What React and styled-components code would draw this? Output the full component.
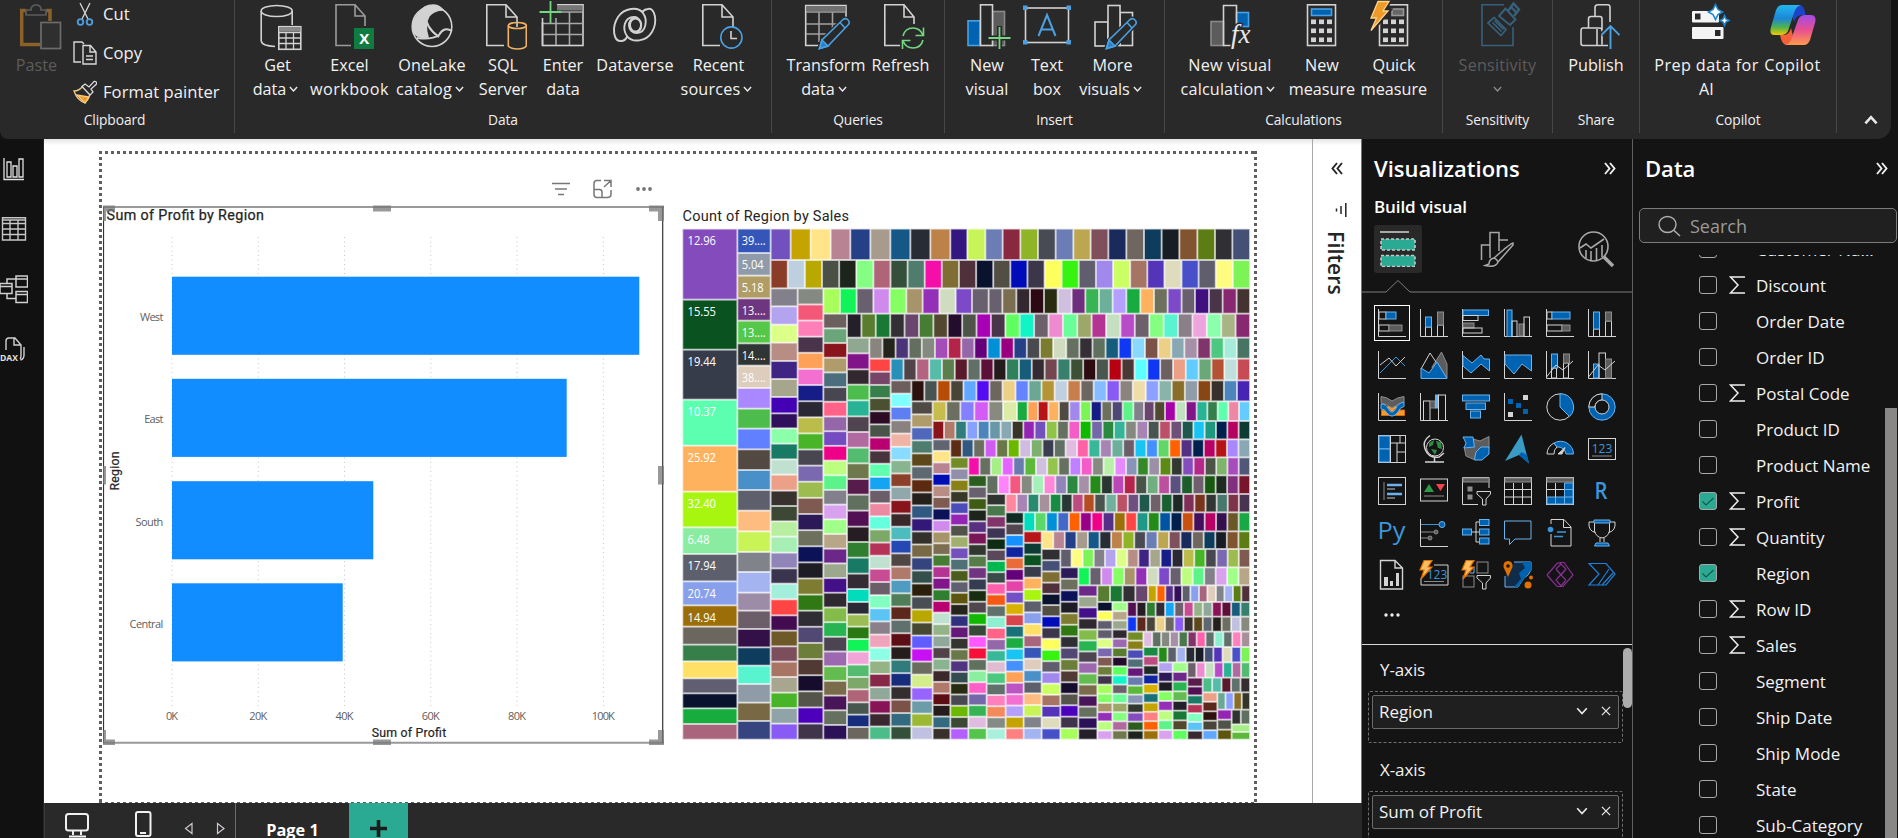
import React from 'react';
import styled, { createGlobalStyle, css } from 'styled-components';

const UI = `'Open Sans', 'Noto Sans', sans-serif`;
const DIN = `Roboto, 'Open Sans', sans-serif`;

const Global = createGlobalStyle`
  * { box-sizing: border-box; }
  body { margin: 0; background: #141414; overflow: hidden; font-family: ${UI}; color: #f2f2f2; }
  svg { display: block; }
`;

const App_ = styled.div`
  width: 1898px; height: 838px; overflow: hidden; display: flex; flex-direction: column; background: #141414;
`;

/* ---------- ribbon ---------- */
const Ribbon = styled.header`
  display: flex; flex: none; width: 1891px; height: 139px; background: #292929;
  border-radius: 0 0 14px 8px;
`;
const Group = styled.section`
  display: flex; flex-direction: column; flex: none; width: ${p => p.$w}px; height: 133px;
  border-right: 1px solid #474747; padding-left: ${p => p.$pad || 0}px;
`;
const Tools = styled.div`display: flex; height: 107px; flex: none;`;
const GroupName = styled.div`
  margin-left: -${p => p.$pad || 0}px; text-align: center; font-size: 13.8px; line-height: 25px; letter-spacing: -0.1px; color: #f0f0f0;
`;
const ToolBox = styled.div`
  width: ${p => p.$w}px; flex: none; display: flex; flex-direction: column; align-items: center;
  font-size: 16.2px; line-height: 24px; white-space: nowrap; letter-spacing: ${p => p.$ls || 0}px;
  color: ${p => (p.$dim ? '#5c5c5c' : '#f2f2f2')};
`;
const ToolLine = styled.div`
  display: flex; align-items: center; gap: 3px; height: 24px; padding-right: ${p => (p.$arrow ? 4 : 0)}px;
  letter-spacing: ${p => p.$ls || 0}px;
`;
const ClipList = styled.div`display: flex; flex-direction: column; margin-top: -6px;`;
const ClipRow = styled.div`
  display: flex; flex: none; align-items: center; gap: 6px; height: 39px; font-size: 16.600px; letter-spacing: 0.05px; white-space: nowrap;
`;
const Collapse = styled.div`flex: 1; display: flex; align-items: flex-end; justify-content: center; padding: 0 0 14px 14px;`;

const Chevron = ({ s = 9, up, c = '#e8e8e8', w = 1.6 }) => (
  <svg width={s} height={s * 0.7} viewBox="0 0 10 7" fill="none" stroke={c} strokeWidth={w}>
    <path d={up ? 'M1 6L5 1.5L9 6' : 'M1 1L5 5.5L9 1'} />
  </svg>
);

const Tool = ({ w, lines, icon, arrow, dim, ls = [] }) => (
  <ToolBox $w={w} $dim={dim}>
    <svg width="48" height="53" viewBox="-24 0 48 53" fill="none" stroke="#d2d2d2" strokeWidth="1.6">{icon}</svg>
    {lines.map((l, i) => (
      <ToolLine key={i} $ls={ls[i]} $arrow={arrow && !dim && i === lines.length - 1}>
        {l}
        {arrow && i === lines.length - 1 && <Chevron c={dim ? '#8a8a8a' : '#e8e8e8'} />}
      </ToolLine>
    ))}
  </ToolBox>
);

const Doc = () => <path d="M14 27V17L3 4.8H-16.2V45.5H1M3 4.8V17H14" />;
const Pencil = () => (
  <g>
    <path d="M-7 49L-4 40L17 19.500Q20 17.500 22 20Q24.500 22.500 22 25L2 46Z" fill="#292929" stroke="#292929" strokeWidth="4" />
    <path d="M-6.500 48.500L-4 40L17 19.500Q20 17.500 22 20Q24.500 22.500 22 25L2 46ZM14 22.500L19 28" stroke="#4aa0e0" fill="#292929" />
    <path d="M-6.500 48.500L-4 40L2 46Z" fill="#2a7fc8" stroke="#4aa0e0" />
  </g>
);
const Keys = () => [24 - 4.5, 28.5, 37.5].map(y => [-11, -3, 5].map(x => (
  <rect key={x + '-' + y} x={x} y={y} width="5" height="4.600" fill="#d2d2d2" stroke="none" />
)));
const Plus = ({ x, y }) => <path d={`M${x - 11} ${y}H${x + 11}M${x} ${y - 11}V${y + 11}`} stroke="#74d680" strokeWidth="1.8" />;

const icons = {
  getData: (<>
    <ellipse cx="-1.300" cy="11" rx="15.500" ry="5.500" />
    <path d="M-16.800 11V41Q-16 46 -3 46.500M14.200 11V25" />
    <rect x="0.800" y="26.700" width="22" height="22.600" fill="#292929" />
    <rect x="1.500" y="27" width="21" height="4.500" fill="#8a8a8a" stroke="none" />
    <path d="M1 32.500H22.500M1 38H22.500M1 43.500H22.500M8 32V49M15.500 32V49" strokeWidth="1.300" />
  </>),
  excel: (<>
    <path d="M15 26V16L5 4.800H-14V45.500H1M5 4.800V16H15" stroke="#9c9c9c" />
    <rect x="4" y="28" width="20.500" height="21" fill="#107c41" stroke="none" />
    <text x="14.200" y="44" textAnchor="middle" fontSize="15" fontWeight="700" fill="#fff" stroke="none">X</text>
  </>),
  oneLake: (<>
    <ellipse cx="0" cy="26.500" rx="19.800" ry="20" />
    <path d="M-13 13Q-8 5 1 5Q7 5 11 10Q2 10 -3 16Q-8 24 -4 37Q-12 39 -17 34Q-23 25 -13 13Z" fill="#d2d2d2" />
    <path d="M-6 15Q-7 27 7 37M-15 38Q0 40 7 35Q12 26 20 31" strokeWidth="2" />
  </>),
  sql: (<>
    <Doc />
    <g stroke="#f2b264"><ellipse cx="14.300" cy="25.500" rx="9" ry="3" /><path d="M5.300 25.500V46Q8 49 14.300 49Q21 49 23.300 46V25.500" /></g>
  </>),
  enter: (<>
    <rect x="-20.500" y="4.800" width="40.500" height="40.700" />
    <rect x="-8" y="5.500" width="27.500" height="5" fill="#777" stroke="none" />
    <path d="M-20 12H20M-20 23.500H20M-20 34.500H20M-7 12V45M6.500 12V45" stroke="#a8a8a8" />
    <path d="M-24 3H-6V18H-24Z" fill="#292929" stroke="none" />
    <path d="M-20.500 22V45.500" />
    <Plus x={-12.5} y={12} />
  </>),
  dataverse: (<g strokeWidth="1.900">
    <path d="M-14 41C-21 42 -24 28 -17 17C-11 8 3 6 8 13C13 20 11 33 2 33C-8 33 -9 19 1 17" />
    <path d="M13 9C20 7 23 22 17 32C11 42 -3 43 -8 36C-13 29 -11 17 -1 17C7 17 9 30 2 32M13 9C10 9 8 11 7 12M-14 41C-11 41 -9 39 -8 37" />
    <ellipse cx="0.500" cy="25" rx="5.500" ry="6.500" />
  </g>),
  recent: (<><Doc /><circle cx="12.400" cy="37.500" r="10.600" fill="#292929" stroke="#4aa0e0" /><path d="M12 31V38.500H18" /></>),
  transform: (<>
    <path d="M20 22V5.500H-20.300V45.500H-6" />
    <rect x="-19.500" y="6" width="39" height="5" fill="#707070" stroke="none" />
    <path d="M-20 12H20M-20 24H12M-20 34H0M-7 12V42M6.500 12V30" stroke="#a0a0a0" />
    <Pencil />
  </>),
  refresh: (<>
    <path d="M13 24V17L3 4.800H-16.200V45.500H-1M3 4.800V17H13" />
    <g stroke="#74d680"><path d="M2 36Q4 28 12 28Q19 28 22 35M22.500 27.500V35.500H14.500M22 40Q20 48 12 48Q5 48 2 41M1.500 49V40.500H9.500" /></g>
  </>),
  newVisual: (<>
    <rect x="-19" y="20.800" width="12" height="24.700" fill="#0063b1" stroke="#4aa0e0" />
    <rect x="5.500" y="11.500" width="12" height="34" fill="#5c5c5c" stroke="#8a8a8a" />
    <rect x="-6.500" y="4.800" width="12" height="40.700" fill="#292929" />
    <path d="M0.500 38H24M12.500 26V49" stroke="#292929" strokeWidth="5" />
    <Plus x={12.5} y={38} />
  </>),
  textBox: (<>
    <rect x="-21.500" y="8" width="43" height="34.500" />
    {[[-24, 5.5], [19.5, 5.5], [-24, 40], [19.5, 40]].map(([x, y]) => <rect key={x + ',' + y} x={x} y={y} width="4.500" height="4.500" fill="#4aa0e0" stroke="none" />)}
    <path d="M-8.500 36L0 15L8.500 36M-5.500 29.500H5.500" stroke="#4aa0e0" strokeWidth="2" />
  </>),
  more: (<>
    <rect x="-18" y="22" width="13" height="24" /><rect x="7" y="12.500" width="12.500" height="33" />
    <rect x="-5" y="5.500" width="12" height="40" fill="#292929" /><Pencil />
  </>),
  calc: (<>
    <rect x="-19" y="21.500" width="12.500" height="24" fill="#5c5c5c" stroke="#8a8a8a" />
    <rect x="6.500" y="12.500" width="12" height="14" fill="#0063b1" stroke="#4aa0e0" />
    <path d="M3 45.500H-6.500V5.500H6.500V30" />
    <text x="1" y="43" fontFamily="'Liberation Serif', serif" fontStyle="italic" fontSize="27" fill="#e8e8e8" stroke="#292929" strokeWidth="3" paintOrder="stroke">fx</text>
  </>),
  measure: (<>
    <rect x="-14.500" y="4.800" width="28" height="40.700" />
    <rect x="-10.500" y="9" width="20" height="6.500" fill="#0063b1" stroke="#4aa0e0" /><Keys />
  </>),
  quick: (<>
    <rect x="-14.500" y="4.800" width="28" height="40.700" />
    <rect x="-2" y="9" width="11.500" height="6.500" fill="#666" stroke="#999" /><Keys />
    <path d="M-16 1.500H-5L-11 11H-6L-23 30.500L-17.500 18H-23Z" fill="#ee9a28" stroke="#292929" strokeWidth="5" />
    <path d="M-16 1.500H-5L-11 11H-6L-23 30.500L-17.500 18H-23Z" fill="#ee9a28" stroke="#ffd48a" strokeWidth="1.300" />
  </>),
  sensitivity: (<g stroke="#36607c">
    <path d="M6 4.800H-16V45.500H15V27" />
    <path d="M-10 23L-4 17.500L8 29.500L3 35.500ZM-5.500 22.500L3.500 31.500M-3.500 20.500L5.500 29.500" strokeWidth="1.700" />
    <path d="M1 16L7.500 8.500L17.500 19.500L12 25Z" strokeWidth="2" />
    <path d="M10 11L15.500 3.500L21 9.500L16 16M13 7L18.500 12.500" strokeWidth="2.400" />
  </g>),
  publish: (<>
    <path d="M6 44.500V30Q6 28 3 28H-13Q-15 28 -15 31V43Q-15 45.500 -13 45.500H14M-7.500 28V19Q-7.500 16.500 -5 16.500H4Q6 16.500 6 19V33M-1 16V7.500Q-1 4.800 2 4.800H12Q14 4.800 14 7.500V22M1 29V45" />
    <path d="M14.500 49V26M5.500 35L14.500 26L23.500 35" stroke="#292929" strokeWidth="5" />
    <path d="M14.500 49V26M5.500 35L14.500 26L23.500 35" stroke="#4aa0e0" strokeWidth="1.900" />
  </>),
  prep: (<>
    <rect x="-15" y="11" width="27" height="11.500" rx="1" fill="#f4f4f4" stroke="none" /><rect x="-12" y="13.500" width="5.500" height="6" fill="#292929" stroke="none" />
    <rect x="-15" y="27" width="31.500" height="12" rx="1" fill="#f4f4f4" stroke="none" /><rect x="8" y="30" width="5.500" height="6" fill="#292929" stroke="none" />
    <g fill="#fff" stroke="#1b86d4"><path d="M8.500 4.500L11 9.500L15.500 12L11 14.500L8.500 19.500L6 14.500L1.500 12L6 9.500Z" /><path d="M17.500 15.500L19 19L22 20.500L19 22L17.500 25.500L16 22L13 20.500L16 19Z" /></g>
  </>),
  copilot: (<>
    <defs>
      <linearGradient id="cpA" x1="0" y1="0" x2="0" y2="1"><stop offset="0" stopColor="#22b8ee" /><stop offset="0.450" stopColor="#1c86d8" /><stop offset="0.750" stopColor="#52b44a" /><stop offset="1" stopColor="#f2c800" /></linearGradient>
      <linearGradient id="cpB" x1="0" y1="0" x2="0" y2="1"><stop offset="0" stopColor="#a24be8" /><stop offset="0.500" stopColor="#e85090" /><stop offset="1" stopColor="#ff9a4a" /></linearGradient>
    </defs>
    <g stroke="none">
      <path d="M2 5H6Q10 5 11.500 10L12.500 15H9Q3 15 1 22L-1 15Z" fill="#1c44c8" />
      <path d="M-4 45H-6Q-10 45 -12 39L-13 35H-9Q-4 35 -2 28L0 36Z" fill="#f4603a" />
      <path d="M-11 5H8Q3 6 1 13L-5 31Q-7 35 -12 35H-19Q-24 35 -22 27L-17 10Q-15 5 -11 5Z" fill="url(#cpA)" />
      <path d="M11 45H-8Q-3 44 -1 37L5 20Q7 15 12 15H18Q24 15 22 23L17 40Q15 45 11 45Z" fill="url(#cpB)" />
    </g>
  </>),
};

const PasteIcon = () => (
  <svg width="74" height="53" viewBox="0 0 74 53" fill="none" strokeWidth="1.700">
    <path d="M26 10.500H21.700V44.500H40M46 10.500H50V21" stroke="#8a6228" strokeWidth="3.500" />
    <path d="M26 15V10H31Q31 5 36.500 5Q41 5 41 10H46V15Z" stroke="#5c5c5c" />
    <rect x="41" y="22.500" width="19.500" height="26" fill="#2f2f2f" stroke="#6c6c6c" />
  </svg>
);
const CutIcon = () => (
  <svg width="24" height="24" viewBox="0 0 24 24" fill="none" stroke="#d8d8d8" strokeWidth="1.300">
    <path d="M7 1L15 17M17 1L9 17" /><circle cx="7.500" cy="20" r="2.800" stroke="#4aa0e0" strokeWidth="1.800" /><circle cx="16.500" cy="20" r="2.800" stroke="#4aa0e0" strokeWidth="1.800" />
  </svg>
);
const CopyIcon = () => (
  <svg width="24" height="24" viewBox="0 0 24 24" fill="none" stroke="#d8d8d8" strokeWidth="1.400">
    <path d="M8 21H1V1H9L11 3M10 4.500H17.500L23 11V23H10ZM17 5V11H23M13 15H20M13 18.500H20" />
  </svg>
);
const PainterIcon = () => (
  <svg width="24" height="24" viewBox="0 0 24 24" fill="none" strokeWidth="1.300">
    <path d="M1 11Q6 11 10 6L17 14Q16 19 12 23Q4 20 1 11Z" fill="#292929" stroke="#f0c888" /><path d="M4 15L12 23L16 17Z" fill="#ee9a28" stroke="#f4ca80" />
    <path d="M9 6.500L12 4L16 7L21 1.500Q24 1 23.500 4L18 9L20 12L17 15Z" stroke="#d8d8d8" fill="#292929" />
  </svg>
);

/* ---------- body ---------- */
const Body = styled.div`display: flex; flex: 1; min-height: 0;`;
const Rail = styled.nav`width: 44px; flex: none; background: #111; border-right: 1px solid #242424;`;
const RailItem = styled.div`height: 60px; display: flex; align-items: center; padding-bottom: 1px; svg { flex: none; }`;
const Center = styled.div`width: 1318px; flex: none; display: flex; flex-direction: column;`;
const Stage = styled.div`height: 664px; flex: none; display: flex; background: linear-gradient(#e4e4e4, #fff 6px);`;
const CanvasArea = styled.main`width: 1268px; padding: 12px 0 0 55px;`;
const dots = dir => `repeating-linear-gradient(${dir}, #5f5f5f 0 3px, transparent 3px 6px)`;
const ReportPage = styled.div`
  width: 1158px; height: 652px; display: flex; padding-left: 4px;
  background:
    ${dots('to right')} top / 100% 3px no-repeat,
    ${dots('to right')} bottom / 100% 1px no-repeat,
    ${dots('to bottom')} left / 3px 100% no-repeat,
    ${dots('to bottom')} right / 3px 100% no-repeat;
`;
const Visual = styled.div`display: flex; flex-direction: column; width: ${p => p.$w}px; margin-right: 17px;`;
const VisualHeader = styled.div`
  height: 53px; display: flex; justify-content: flex-end; align-items: center; gap: 23px; padding: 23px 12px 0 0;
`;
const FiltersPane = styled.aside`
  width: 50px; border-left: 1px solid #a8a8a8; border-right: 1px solid #777; background: linear-gradient(#e4e4e4, #fff 6px);
  display: flex; flex-direction: column; align-items: center; padding-top: 23px; color: #252423;
`;
const FilterGlyph = styled.svg`margin: 28px 0 0 8px;`;
const FiltersLabel = styled.div`
  writing-mode: vertical-rl; font-size: 21px; font-weight: 600; line-height: 24px; letter-spacing: 0.200px; margin: 14px 0 0 -3px;
`;
const Footer = styled.footer`flex: 1; background: #292929; display: flex; border-left: 1px solid #3a3a3a;`;
const FootIcons = styled.div`width: 191px; border-right: 1px solid #6a6a6a;`;
const PageTab = styled.div`width: 113px; text-align: center; font-weight: 700; font-size: 16.300px; line-height: 55px; height: 35px; overflow: hidden; color: #fff;`;
const AddTab = styled.div`width: 59px; background: #2aaa92; display: flex; justify-content: center; padding-top: 17px;`;

/* ---------- bar chart ---------- */
const bars = [
  { name: 'West', y: 276.7, w: 467.3, ty: 317, tw: 23.3 },
  { name: 'East', y: 378.8, w: 394.7, ty: 419, tw: 19 },
  { name: 'South', y: 481.2, w: 201.3, ty: 522, tw: 27.7 },
  { name: 'Central', y: 583.3, w: 170.7, ty: 624, tw: 33.7 },
];
const BarChart = () => (
  <svg width="562" height="544" viewBox="103 204 562 544" fontFamily={UI}>
    <text x="106.500" y="220.300" fontFamily={DIN} fontSize="14.300" fill="#252423" stroke="#252423" strokeWidth="0.250" textLength="157.500">Sum of Profit by Region</text>
    {[0, 1, 2, 3, 4, 5].map(i => {
      const x = 172 + i * 86.27;
      return (
        <g key={i}>
          <line x1={x} x2={x} y1="237" y2="707" stroke="#c8c6c4" strokeDasharray="1 3.500" />
          <text x={x} y="720" fontSize="11" fill="#605e5c" textAnchor="middle" textLength={[12, 18, 18, 18, 18, 23][i]}>{i * 20}K</text>
        </g>
      );
    })}
    {bars.map(b => (
      <g key={b.name}>
        <rect x="172" y={b.y} width={b.w} height="78.100" fill="#118dff" />
        <text x={163.3 - b.tw} y={b.ty + 4} fontSize="11" fill="#605e5c" textLength={b.tw}>{b.name}</text>
      </g>
    ))}
    <text x="371.700" y="736.500" fontFamily={DIN} fontSize="12.300" fill="#252423" stroke="#252423" strokeWidth="0.200" textLength="74.500">Sum of Profit</text>
    <text transform="translate(119.300 490.500) rotate(-90)" fontFamily={DIN} fontSize="12.300" fill="#252423" stroke="#252423" strokeWidth="0.200" textLength="39">Region</text>
    <path d="M103 207H664M103 742.700H664" stroke="#999" strokeWidth="2" />
    <path d="M103.500 207V743M662.700 207V743" stroke="#333" strokeWidth="1.200" />
    <g fill="#777" fillOpacity="0.750">
      <path d="M103 205.500H115V211.500H106V221H103ZM664 205.500H649V211.500H658V221H664ZM103 745H115V739.500H106V730H103ZM664 745H649V739.500H658V730H664Z" />
      <path d="M373 205.500H391V211.500H373ZM373 739.500H391V745H373ZM103 466H106V484.500H103ZM658 466H664V484.500H658Z" />
    </g>
  </svg>
);

/* ---------- treemap: strips peeled off the remaining area, 'v' = column, 'h' = row ---------- */
const strips = [
  ['v', 187, '844BBD 0A5220 373C4A 5CFFB0 FFB25E A8F60F 8AECA0 5D606C 88A0EC 9B6E0A 6C675E 367F4B FFE066 605E70 0A132D 18AC3F A8657B',
    [86, 299, 449, 599, 737, 875, 982, 1062, 1144, 1216, 1280, 1334, 1384, 1435, 1480, 1525, 1572, 1619]],
  ['v', 287, '3556B8 8F9BA8 B09C64 6F3680 55C84A 303434 DECCBC AA88FF 4CBC4C 6080FF 524A42 4A90C8 5D606C FFBC80 C8F458 80838A A4B4F0 9C8CA8 6C5E68 341048 0E3C5C 58F4D0 8F9CA8 786844 364480',
    [86, 159, 227, 295, 362, 430, 497, 564, 626, 686, 748, 810, 870, 932, 994, 1056, 1116, 1178, 1232, 1287, 1342, 1397, 1452, 1508, 1563, 1619]],
  ['h', 180, '7250BE C6A400 FFE488 B88494 264088 A89A8C 155888 282C34 BC824A 341680 C8F458 6C7CB4 8A2840 90B428 484A54 6C7CB4 BCA650 7E505C 1A2A5C 706660 0E3C5C 181C24 80542E 5C7C14 303034 445074',
    [287, 347, 407, 467, 526, 586, 646, 706, 766, 826, 877, 931, 983, 1036, 1089, 1142, 1195, 1247, 1300, 1354, 1407, 1460, 1513, 1567, 1620, 1672, 1725]],
  ['h', 265, '8A3C28 BED0E0 B8A800 4A5044 1C241C 84FF84 B06478 34503A 507C6E F410A8 7E6E34 50303A 0A132D 524E44 000CB8 3C364A FCFF5C 36F40F 605E6C A088EC CCFF64 A67464 5434B8 DEDCBC 4850C8 605E6C FFFC80 7CF458'],
  ['v', 368, '82808A B4A4F0 DCFF88 B88E84 402484 A6A68C 4400B4 30105C 8CFFAA 187A64 C0E0D0 ECA088 38322E 3C4834 B8EEA0 A6EEB4 9084B8 3A344E A4EEDC FF4444 440C50 6E5A28 7C4E5C A87464 A8A68E 48B428 90A4A8 885CF4',
    [265, 319, 374, 428, 483, 537, 591, 640, 685, 731, 778, 824, 872, 918, 964, 1010, 1058, 1105, 1151, 1198, 1246, 1292, 1339, 1385, 1431, 1478, 1524, 1571, 1619]],
  ['v', 445, '848A80 F45878 FF80B8 4A344C FFA258 F470D0 161C88 2A2834 BCBC4A 48B428 484650 7A68B0 9CBC50 7E5A50 2C1A58 6E705E 0C1258 1E1C24 7E7C30 307814 2E2E34 524874 6C7E3A 523A34 160C2C 54544A 4C00BC 40344A'],
  ['h', 341, 'A8FF5C 10F458 68606E D08AEE 84FF64 A8946A 9430B8 D0DCC0 7C4AC8 68606E 68606E 7A6E50 342830 2C0A14 282C10 D0C0E0 6E307E 38B454 6CB09C B4A0FF 18AC40 FFB25E 6E705E 7C4AC8 68606E 401080 4A3448 882870 443430',
    [445, 495, 545, 595, 644, 694, 743, 793, 842, 891, 941, 982, 1024, 1065, 1107, 1148, 1190, 1231, 1272, 1313, 1354, 1396, 1437, 1478, 1520, 1560, 1602, 1643, 1685, 1725]],
  ['v', 516, '6C605E 6AA67A 88141C B09C6A 4C6E7C 484650 FF6488 9468A8 744CC0 EE0088 BCFF80 5CF488 82808A D8A2EE A0FF88 B8A688 6C2888 9CA88E 441088 302830 84BC4C 28B450 4C4450 9C68B0 64BC50 7A6C4A 481658 667060 2C1058'],
  ['h', 413, '24202A 587C30 187834 323034 68466E 467C34 524830 240C2C 4E5448 A800B4 4A3448 60FF60 10F4C8 6C606A EE8AD0 68FF98 9CA868 B43494 C4E0C0 B84CC8 6C606A 84FF80 58F4D0 8A808A EEA4DC 8CFFAC A8B484 882870'],
  ['v', 583, '90A892 801488 342830 4CBC4C 28B494 504450 B06AA0 54BC70 6E784C 581C4C 60705E 520F54 261C24 307E30 187A64 342C34 00DCBC 2A2A36 9CBC54 2A7810 10F458 F0A4D8 54BC70 7CA86A B06478 485650 162C7C 6C675E',
    [413, 460, 508, 554, 601, 649, 696, 743, 790, 837, 884, 932, 980, 1026, 1073, 1121, 1167, 1206, 1243, 1280, 1317, 1355, 1394, 1431, 1468, 1507, 1544, 1581, 1619]],
  ['h', 476, '8A847E 24241C 4C3478 646E60 848A80 A44CB8 B4244A 9468A8 640078 0090D8 980080 264088 484A50 7C7C30 D0DCC0 667060 342F34 60705E 165C7C 1038F4 88D8FF 7A5248 ECD088 88A8B4 A690A8 80346A 4CC880 A6ECD8 487464'],
  ['v', 647, 'FF4444 784468 367F4B 4A5030 2C0C24 485448 B80070 48343C 60FFB0 14A4F4 6C5E68 EC8AA4 64FFDC 7CA86A B43458 C0E0D0 C84C94 6C5E68 80FFC0 5CC4F4 8A808A F0A4BC 8CFFE4 94B488 882848 90A89A 881458 3A2830 4CBC88'],
  ['h', 541, '2890B8 504448 B46480 54BCA8 5C7E4C 5A1A2C 607068 5C1038 241C1C 30805C 185C7C 342C30 744650 38806E 3C5034 2C0C10 4A564E B80010 4A3834 5CFFFF 1038F4 6C6060 ECA088 60CCFF 6AA878 B45234 C0DEDC C84A54'],
  ['v', 709, '6C5E5C 80FFFF 5C80F4 8A8280 F0B4A4 88DCFF 88B490 8A402A 90A8AC 88141C 3A282A 4CBCBC 2448B4 504644 B07A6A 509CC0 507E58 5C281C 60706C 5C0E14 261C1C 307C7C 162C7C 342E2E 7A5248 346A80 34503A'],
  ['h', 604, '2C120E 485450 B84C04 484438 60A8FF 540CF4 6C665E ECD088 6484FF 6AA894 B49434 C0D0E0 C87E4C 6C6660 84BCFF 885CF4 8A8480 F0DCA8 8CA0FF 8AB4A8 886E28 909CA8 884614 38302A 4C84BC 4824B4'],
  ['v', 773, '504A44 B09C6A 5068BC 4E7C6E 5C4818 5E6870 5C2A10 26201C 305880 341878 34302C 786844 34447C 34504A 2C200C 484E54 B8A800 464834 605CFF C810F4 6A6C5E D4EC8A 9864FF 6C9CA8 9CB834 C0C0E0'],
  ['h', 663, 'C8BC4C 6C6E60 8480FF D45CF4 888A80 DCECA8 18AC40 FFA258 B81418 FFB25E 504A44 A088EC 7CF458 161C84 6E705E 504874 5CF488 82808A 68466E 504830 A800A8 C0E0C0 801488 28B494 367F4B 60FFB0 EC88A4 64CCFF',
    [773, 814, 856, 898, 941, 984, 1026, 1058, 1089, 1120, 1152, 1183, 1216, 1248, 1280, 1311, 1343, 1375, 1407, 1438, 1470, 1502, 1533, 1565, 1597, 1628, 1660, 1692, 1725]],
  ['h', 718, '88141C B07A6A 307C7C 88A0FF 4C84BC 6898A8 88A8B4 383428 9424B4 7450BC 90C448 667060 F45CC8 10B800 7468A8 2A8840 34B498 848A80 A884B4 485450 BC5068 6E5078 1E584C 18C4F4 209880 00204E B40060 0C3C34'],
  ['v', 826, '606470 FFE488 B88494 000CB4 B88E84 7E5A50 0C1258 D08AEE A8946A 7C6E50 467C34 B43494 801488 307E30 B80070 C0E0D0 94B488 90A89A 504448 8AB490 3A282A B07A6A 5C0E14 261C1C 346A80 38302A'],
  ['h', 772, '5C2C14 305880 6C6E60 D05CF4 6A7848 6CB800 D0BCE0 7CB06C 383E50 607064 E0BCE0 FF60A8 38B898 A884B4 6CB09C 6C5E68 18C4F4 4490FF 60D868 FF6000 543084 00204E B80064 B41418 A888FF 88A8B4'],
  ['v', 880, '728C28 9090A8 8A8018 383828 4C4CB8 9424B4 505448 A0B06C 7450BC 507078 4C5C1C 606070 5C540F 24241C 30307C 641878 343430 687848 503480 344C50 282C10 484850 6CB800 3A4834 B460FF'],
  ['h', 826, 'F410A8 667060 A6EE88 E464FF 687CB0 5CB838 D0C0E0 94C44C 667060 C080FF F45CC8 848A80 B8F0A8 E88AFF 8894B8 348828 9C90A8 5C8A14 303830 844CBC B4288A 4C5448 80B46C A64CBC 505878'],
  ['v', 935, '2C5C20 68606E 3E5C14 1C241C 583080 781658 303830 567C4A 703480 343C50 182C10 50464E 10B800 364838 FF58FF F41038 60705E 8AF0A0 FF60C8 7468A8 34B454 E0BCE0 54C44C'],
  ['h', 882, '607060 FF84FC F45880 848A80 A4F0B8 FF88D8 9084B8 2A8840 A690A8 248A18 283830 BC48B8 B4244A 485448 70B080 BC509C 5C5080 1E5C2C 70606E 185810 1E2C20 80307C 78142C'],
  ['v', 992, '303430 48784C 80346A 3E3454 0E2C14 58485A 00B850 3A4C48 FF60AC F45814 60706A 8CF0D0 FF6488 9468A8 38B898 E0BCD0 4CC880 60706A FF80BC F48A5C 848A84 A8F0DC'],
  ['h', 937, 'FF88A0 A884B4 2A8A70 A8909A 188A44 283834 BC4C80 B44C24 4A544E 70B09C BC5064 6E5080 205A4C 706068 186030 1E2824 803058 78341C 303634 48786C 7E3448 483450'],
  ['v', 1046, '102C24 524650 1490FF 1024A0 E86C38 640078 E444A8 7450C4 D8B000 D8444C 187078 1CAC44 18C4F4 4490FF FFA258 BC54C4 F470D0 B4A0FF C6A400 FF8080'],
  ['h', 994, '00DCBC 5CD868 0090D8 4468C8 FF6000 980088 F00088 543088 9B700A FF4444 209888 248A18 0054A0 00204E C85010 44105C B80064 34104C 6A5828 18A844'],
  ['v', 1100, 'B81418 0C3C34 0A5220 363C4A FFB25E A8F60F 5D606C 8AA0EC FFE066 A8657B 3556B8 DECCBC 4A90C8 5D606C FFBC80 C8F458 80838A A4B4F0'],
  ['h', 1047, 'FFE488 B88494 264088 A89A8C 155888 282C34 BC824A 90B428 484A54 6C7CB4 BCA650 7E505C 1A2A5C 706660 0E3C5C 181C24 80542E 5C7C14'],
  ['v', 1156, '303034 445074 7E6E34 50303A 0A132D 524E44 000CB8 3C364A FCFF5C 36F40F 605E6C A088EC CCFF64 A67464 5434B8 DEDCBC 4850C8'],
  ['h', 1102, '605E6C FFFC80 7CF458 82808A B4A4F0 DCFF88 B88E84 402484 A6A68C 161C88 2A2834 BCBC4A 48B428 484650 7A68B0 9CBC50 7E5A50'],
  ['v', 1210, '2C1A58 6E705E 0C1258 1E1C24 7E7C30 307814 2E2E34 524874 6C7E3A 523A34 160C2C 54544A 4C00BC 40344A A8FF5C'],
  ['h', 1156, '10F458 68606E D08AEE 84FF64 A8946A 9430B8 D0DCC0 7C4AC8 68606E BCFF80 5CF488 82808A D8A2EE A0FF88 B8A688'],
  ['v', 1267, '6C2888 9CA88E 441088 302830 84BC4C 28B450 4C4450 9C68B0 64BC50 7A6C4A 481658 667060 2C1058 24202A'],
  ['h', 1206, '587C30 187834 323034 68466E C6A400 FF6000 543088 341058 5D606C 8AA0EC A8657B DECCBC 80838A A4B4F0 5C7C14 50303A',
    [1267, 1305, 1343, 1381, 1419, 1445, 1471, 1496, 1521, 1546, 1572, 1597, 1623, 1648, 1674, 1699, 1725]],
  ['v', 1312, '0A132D FCFF5C 605E6C 605E6C DCFF88 7A68B0 7E5A50 6C7E3A 40344A A8FF5C 84FF64 A8946A 9430B8 BCFF80 D8A2EE'],
  ['v', 1357, 'A0FF88 B8A688 9CA88E 302830 9C68B0 587C30 240C2C 60FF60 10F4C8 6C606A 68FF98 9CA868 84FF80 B06AA0 6E784C'],
  ['h', 1250, '520F54 261C24 307E30 342C34 14A4F4 6C606A C84C94 94B488 90A89A 881458 5C1038 185C7C 38806E'],
  ['h', 1295, '1038F4 5C281C 484438 ECD088 6C6660 885CF4 38302A 5C4818 5E6870 24201C 6C6E60 C0C0E0 888A80'],
  ['v', 1405, '728C28 8A8018 4C4CB8 507078 641878 687CB0 5CB838 8894B8 303830 844CBC 2C5C20 1C241C'],
  ['h', 1341, 'E0BCE0 607060 848A80 A690A8 48784C 80346A FF60AC 60706A 8CF0D0 60706A FF80BC A8909A'],
  ['v', 1450, '188A44 BC4C80 1E2824 1024A0 D8B000 187078 C6A400 FF8080 FF6000 9B700A'],
  ['h', 1387, '248A18 5D606C A4B4F0 282C34 181C24 445074 5434B8 DEDCBC 4850C8 7CF458'],
  ['v', 1493, 'B4A4F0 2C1A58 1E1C24 84FF64 9430B8 BCFF80 5CF488 D8A2EE'],
  ['v', 1537, 'A0FF88 6C2888 28B450 64BC50 24202A 187834 524830 60FF60'],
  ['h', 1433, '6C606A EE8AD0 C4E0C0 B84CC8 28B494 B06AA0 54BC70'],
  ['v', 1583, '581C4C 520F54 187A64 B43458 80FFC0 5CC4F4 3A2830'],
  ['h', 1477, '4CBC88 54BCA8 5A1A2C 60706C 342E2E'],
  ['v', 1627, 'ECA088 5C281C 2C120E 484438 60A8FF'],
  ['h', 1529, '6AA894 8CA0FF 886E28 343428'],
  ['v', 1670, '9424B4 505448 5C540F'],
  ['h', 1573, '303430 60705E'],
  ['v', 1725, 'A6EE88 5CB838'],
];
const tiles = (() => {
  let x = 22, y = 86;
  const R = 1725, B = 1619, out = [];
  strips.forEach(([dir, to, list, breaks]) => {
    const cs = list.split(' ');
    const start = dir === 'v' ? y : x, end = dir === 'v' ? B : R;
    const at = i => (breaks ? breaks[i] : start + ((end - start) * i) / cs.length);
    cs.forEach((c, i) => {
      const a = at(i), b = at(i + 1);
      out.push(dir === 'v' ? [x, a, to - x, b - a, c] : [a, y, b - a, to - y, c]);
    });
    if (dir === 'v') x = to; else y = to;
  });
  return out;
})();
const labelsA = ['12.96', '15.55', '19.44', '10.37', '25.92', '32.40', '6.48', '17.94', '20.74', '14.94'];
const labelsB = ['39....', '5.04', '5.18', '13....', '13....', '14....', '38....'];
const Treemap = () => (
  <svg width="570" height="540" viewBox="682 204 570 540">
    <text x="682.500" y="220.500" fontFamily={DIN} fontSize="14.500" fill="#252423" textLength="166.500">Count of Region by Sales</text>
    <g transform="translate(675 200) scale(0.33333)">
      {tiles.map(([x, y, w, h, c], i) => (
        <g key={i} fill={'#' + c}>
          <rect x={x + 0.5} y={y + 0.5} width={w - 1} height={h - 1} opacity="0.400" />
          <rect x={x + 3} y={y + 3} width={w - 6} height={h - 6} />
        </g>
      ))}
    </g>
    <g fontFamily={UI} fontSize="12.600" fill="#fff">
      {labelsA.map((t, i) => <text key={t} x="687.500" y={200 + strips[0][3][i] / 3 + 16.3} textLength={t.length === 5 ? 28.5 : 22} lengthAdjust="spacingAndGlyphs">{t}</text>)}
      {labelsB.map((t, i) => <text key={i} x="741.700" y={200 + strips[1][3][i] / 3 + 16.3} textLength={i === 1 || i === 2 ? 22 : 24} lengthAdjust="spacingAndGlyphs">{t}</text>)}
    </g>
  </svg>
);

/* ---------- visualizations pane ---------- */
const Pane = styled.aside`
  flex: none; width: ${p => p.$w}px; background: #141414; ${p => p.$line && css`border-right: 1px solid #5e5e5e;`}
  display: flex; flex-direction: column;
`;
const PaneHead = styled.div`
  display: flex; justify-content: space-between; align-items: center; height: 28px; margin-top: 15px;
  padding: 0 ${p => p.$r}px 0 12px; font-size: 22px; line-height: 28px; font-weight: 600; color: #fff;
`;
const SubHead = styled.div`margin: 13px 0 0 12px; height: 24px; line-height: 24px; font-weight: 600; font-size: 17px; letter-spacing: -0.1px; color: #fff;`;
const ModeTabs = styled.div`display: flex; justify-content: space-between; margin: 6px 12px 0; height: 48px;`;
const ModeTab = styled.div`
  width: 48px; height: 48px; border-radius: 3px; background: ${p => (p.$on ? '#292929' : 'transparent')};
  display: flex; align-items: center; justify-content: center;
`;
const Notch = styled.svg`margin-top: 6px; flex: none;`;
const IconGrid = styled.div`display: grid; grid-template-columns: repeat(6, 36px); grid-auto-rows: 36px; gap: 6px; padding: 12px 0 0 12px; height: 351px; flex: none;`;
const IconCell = styled.div`
  display: flex; align-items: center; justify-content: center; outline: ${p => (p.$on ? '1px solid #fff' : 'none')}; outline-offset: -1px;
`;
const Wells = styled.div`flex: 1; border-top: 1px solid #d8d8d8; display: flex; overflow: hidden;`;
const WellList = styled.div`flex: none; width: 261px; padding-left: 6px;`;
const Well = styled.div`height: 100px; font-size: 17px; white-space: nowrap;`;
const WellName = styled.div`height: 46px; line-height: 49px; padding-left: 12px; letter-spacing: -0.1px;`;
const Drop = styled.div`width: 255px; height: 52px; border: 1px dashed #6e6e6e; border-radius: 2px; padding: 3px;`;
const Field = styled.div`
  height: 34px; border: 1px solid #6a6a6a; border-radius: 2px; background: #1f1f1f; display: flex; align-items: center;
  padding: 0 7px 2px 6px; gap: 13px;
`;
const FieldName = styled.span`flex: 1; letter-spacing: -0.05px;`;
const Thumb = styled.div`width: 9px; height: 60px; margin: 3px 0 0 0; border-radius: 5px; background: #adadad;`;

const Double = ({ left, c = '#f0f0f0' }) => (
  <svg width="12" height="13" viewBox="0 0 12 13" fill="none" stroke={c} strokeWidth="1.900">
    <path d={left ? 'M6 1L1.500 6.500L6 12M11 1L6.500 6.500L11 12' : 'M1 1L5.500 6.500L1 12M6 1L10.500 6.500L6 12'} />
  </svg>
);

const W = '#d4d4d4', G = '#8c8c8c', GF = '#5c5c5c', BL = '#6cb2ec', BF = '#0063b1';
const Axes = () => <path d="M0.500 0V27.500H28" stroke={W} fill="none" />;
const R = (x, y, w, h, f, s) => <rect key={`${x}-${y}-${w}`} x={x} y={y} width={w} height={h} fill={f || 'none'} stroke={s || W} />;
const Bolt = () => <path d="M4 -0.500H12L8 6H12L1 18L4 9H0Z" fill="#fbbd62" stroke="#e07000" strokeWidth="1.200" />;
const Funnel = () => <path d="M15 14.500H28.500V17L24 22V28H20.500V22L15 17Z" fill="#141414" stroke={W} />;
const viz = [
  <><Axes />{R(1, 3, 7, 7)}{R(8, 3, 10, 7, BF, BL)}{R(1, 16, 10, 6)}{R(11, 16, 13, 6, GF, G)}</>,
  <><Axes />{R(5.5, 18, 6, 9.5)}{R(5.5, 8, 6, 10, BF, BL)}{R(17.5, 16, 6, 11.5)}{R(17.5, 3, 6, 13, GF, G)}</>,
  <><Axes />{R(1, 1, 25.500, 5.500, BF, BL)}{R(1, 6.500, 15, 5)}{R(1, 14, 11, 5, GF, G)}{R(1, 19, 19, 5)}</>,
  <><Axes />{R(3, 1, 5, 26.500, BF, BL)}{R(8, 12, 5, 15.500)}{R(15, 15, 5, 12, GF, G)}{R(20, 8, 5.500, 19.500)}</>,
  <><Axes />{R(1, 3, 5, 7)}{R(6, 3, 18, 7, BF, BL)}{R(1, 16, 15, 6)}{R(16, 16, 8, 6, GF, G)}</>,
  <><Axes />{R(5.500, 20, 6, 7.500)}{R(5.500, 3, 6, 17, BF, BL)}{R(17.500, 12, 6, 15.500)}{R(17.500, 3, 6, 9, GF, G)}</>,
  <><Axes /><path d="M2 22L18 6L27 15" stroke="#3c96dc" fill="none" /><path d="M2 14L11 7L18 15L27 6" stroke={W} fill="none" /></>,
  <><path d="M12 16L21.500 1L27 13V27H16Z" fill={GF} stroke={G} /><path d="M1 18L10 2L22 20" stroke={W} fill="none" /><path d="M1 27.500V17L9 22L17 11L27 27.500Z" fill={BF} stroke={BL} /></>,
  <><Axes /><path d="M1 4.500L10 12L19 4L22 8H27.500V20L19 13L9 22L1 15Z" fill={BF} stroke={BL} /></>,
  <><Axes /><path d="M1 4H27.500V20L18 13L10 23L1 13Z" fill={BF} stroke={BL} /></>,
  <><Axes />{R(5.500, 17, 5, 10)}{R(5.500, 3, 6, 14, BF, BL)}{R(17.500, 12, 5, 15)}{R(17.500, 3, 6, 9, GF, G)}<path d="M0.500 26L10 14L17 19L27 10" stroke={W} fill="none" /></>,
  <><Axes />{R(5.500, 13, 5.500, 14, BF, BL)}{R(11, 2, 6.500, 25.500)}{R(17.500, 8, 6, 19, GF, G)}<path d="M0.500 26L10 14L17 19L27 10" stroke={W} fill="none" /></>,
  <><Axes /><path d="M3.500 17H26.500V22.500H3.500Z" fill="#f59a2a" stroke="#d86a00" /><path d="M9 14Q14 8 19 14L14 19Z" fill="#f59a2a" stroke="#d86a00" /><path d="M3 3.500Q9 4 14 8Q20 4 26 3.500V9Q20 11 14 15Q9 11 3 10Z" fill={GF} stroke={G} /><path d="M3 11Q8 11 10.500 16Q14 22 17.500 16Q20 10 26 9V13.500Q22 14 20 19Q14 27 8.500 19.500Q7 16 3 16Z" fill={BF} stroke={BL} /></>,
  <><Axes />{R(3.500, 8, 6.500, 19.500)}{R(10, 8, 5, 7, GF, G)}{R(15.500, 2, 3, 13, BL, BL)}{R(18.500, 2, 7, 25.500)}</>,
  <>{R(0.500, 2, 27, 6, BF, BL)}{R(4, 10, 19.500, 6.500, BF, BL)}{R(8.500, 18, 10, 7, BF, BL)}</>,
  <><Axes />{[[19, 2, W], [4, 6, BF], [12, 10, BF], [19, 16, BF], [4, 19, W]].map(([x, y, c]) => <rect key={x + '-' + y} x={x} y={y} width="5" height="5" fill={c} />)}</>,
  <><circle cx="14" cy="14" r="13.200" stroke={W} fill="none" /><path d="M14 0.800A13.200 13.200 0 0 1 23.500 23.500L14 14Z" fill={BF} stroke={BL} /></>,
  <><circle cx="14" cy="14" r="13.200" stroke={BL} fill={BF} /><path d="M14 0.800A13.200 13.200 0 0 0 0.800 14H7A7 7 0 0 1 14 7Z" fill="#141414" stroke={W} /><circle cx="14" cy="14" r="7" fill="#141414" stroke={W} /></>,
  <>{R(0.500, 0.500, 27, 27)}{R(1, 1, 11, 13, BF, BL)}{R(1, 14, 11, 13, BF, BL)}<path d="M12.500 8H27M19 8V27M12.500 1V27M19 17H27M22 1V8" stroke={W} fill="none" /></>,
  <><circle cx="15" cy="12.500" r="8.500" stroke={W} fill="none" /><path d="M9 8L14 5L13 10L9 12ZM16 6L21 7L22 14L18 13ZM11 14L17 15L15 20Z" fill="#2e8b40" /><path d="M10 0.500Q2 6 5 14Q9 24 19 22L24 18M14.500 22V26.500M5 27H24" stroke={W} fill="none" strokeWidth="1.500" /></>,
  <><path d="M11 4L18 6L27 1.500V13L20 23L13 25L4 21L2 12Z" fill={GF} stroke={G} /><path d="M1 2H11L12.500 12L2 13L4 8Z" fill={BF} stroke={BL} /><path d="M12.500 24L14 17L19 12H27V19L20 25L13 25Z" fill={BF} stroke={BL} /></>,
  <><path d="M17.500 -0.500L1 26L15 20L25 28.500Z" fill="#3a9cc4" /><path d="M15 20L25 28.500L23 20L17.500 17Z" fill="#0063b1" /></>,
  <><path d="M1 19A13 13 0 0 1 8 8L11 12A8 8 0 0 0 8 19Z" fill="none" stroke={W} /><path d="M8 8A13 13 0 0 1 27.500 19H20A8 8 0 0 0 11 12Z" fill={BF} stroke={BL} /><path d="M12 19L19 12.500L16 19Z" fill={W} stroke={W} /></>,
  <>{R(0.500, 3.500, 27, 21)}<text x="14" y="18" fontSize="12" textAnchor="middle" fill="#3c96dc">123</text><path d="M4 21H24" stroke={G} /></>,
  <>{R(0.500, 0.500, 27, 27)}<path d="M6 5V23" stroke={G} /><path d="M9 8H24M9 17H24" stroke={BL} strokeWidth="2.500" /><path d="M9 12H17M9 21H17" stroke={G} strokeWidth="1.500" /></>,
  <>{R(0.500, 2, 27, 22)}<path d="M4 15L9 7L14 15Z" fill="#2e9a48" /><path d="M16 7H25L20.500 14Z" fill="#f04848" /><path d="M4 19H24" stroke={G} /></>,
  <><path d="M27 11V0.500H0.500V27.500H16" fill="none" stroke={W} />{R(1, 1, 26, 4, GF, G)}{R(6, 10, 4, 4, G, G)}{R(6, 18, 4, 4, G, G)}<Funnel /></>,
  <>{R(0.500, 0.500, 27, 27)}{R(1, 1, 26, 4, GF, G)}<path d="M1 12.500H27M1 20H27M9.500 6V27M18.500 6V27" stroke={W} /></>,
  <>{R(0.500, 0.500, 27, 27)}{R(1, 1, 26, 4, GF, G)}<path d="M18.500 6H27V27H1V20H18.500Z" fill={BF} stroke={BL} /><path d="M1 12.500H18M9.500 6V20" stroke={W} /><path d="M18 12.500H27M18.500 20H27M9.500 20V27M18.500 20V27" stroke={BL} /></>,
  <text x="13" y="22" fontSize="23" fontWeight="600" textAnchor="middle" textLength="13" lengthAdjust="spacingAndGlyphs" fill="#3c96dc">R</text>,
  <text x="-0.500" y="20" fontSize="23" textLength="28" fontWeight="500" lengthAdjust="spacingAndGlyphs" fill="#3c96dc">Py</text>,
  <><Axes /><path d="M1 5.500H19" stroke="#3c96dc" /><circle cx="22" cy="5.500" r="3" fill={BF} stroke={BL} /><path d="M1 13H14M1 19H8" stroke={G} /><circle cx="16" cy="13" r="2" fill={GF} stroke={G} /><circle cx="10" cy="19" r="2" fill={GF} stroke={G} /></>,
  <><path d="M10 13H18M14 3V23M14 3H18M14 23H18" stroke={W} fill="none" />{R(0.500, 10, 9, 6, BF, BL)}{R(17.500, 0.500, 9.500, 6, BF, BL)}{R(17.500, 10, 9.500, 6, BF, BL)}{R(17.500, 19, 9.500, 6, BF, BL)}</>,
  <path d="M0.500 2H27V20H11L5.500 25.500V20H0.500Z" fill="none" stroke={BL} />,
  <><path d="M5 5V0.500H18L25 8V27H5V15M17.500 1V8.500H25" fill="none" stroke={W} /><circle cx="4.500" cy="10.500" r="2.800" fill="#3c96dc" /><path d="M11 13H20M8 17.500H17" stroke="#3c96dc" strokeWidth="1.300" /></>,
  <><path d="M6.500 3V12Q8 18 14 19Q20 18 21.500 12V3M6.500 3H1Q0 12 7.500 13.500M21.500 3H27Q28 12 20.500 13.500M12 19V23M16 19V23" fill="none" stroke={W} /><path d="M6 1H22V4H6ZM8 24H20L21.500 27H6.500Z" fill={BF} stroke={BL} /></>,
  <><path d="M2.500 -0.500H17L24.500 7V28H2.500ZM17 0V7H24" fill="none" stroke={W} strokeWidth="1.400" /><path d="M6 16H10V25H6ZM12 20H15V25H12ZM18 12H21V25H18Z" fill={W} /></>,
  <><path d="M14 4H28V24H1V17" fill="none" stroke={W} /><text x="17" y="18" fontSize="12" textAnchor="middle" fill="#3c96dc">123</text><path d="M4 20.500H24" stroke={G} /><Bolt /></>,
  <>{R(15, 1, 11, 11, 'none', G)}{R(1, 15, 11, 11, 'none', G)}<path d="M8 12H12V6" stroke={BL} fill="none" /><Bolt /><Funnel /></>,
  <><path d="M1 15V26H14L20 17L24 14L27 9V1H10" fill="#102c48" stroke={BL} /><path d="M18 1L21 7L15 12L17 18L10 26H14L22 15L27 9V1Z" fill={BF} /><path d="M4 0Q9 0 8.500 6L4 16L-0.500 6Q-1 0 4 0Z" fill="#e07000" /><circle cx="4" cy="5" r="1.800" fill="#141414" /><circle cx="24" cy="24" r="3.500" fill="#e07000" /><circle cx="27" cy="16.500" r="2" fill="#e07000" /></>,
  <path d="M1 14L11 2.500Q13 1 15 3L20 8L10 19L15 25M14 1.500H18L27 14L17 25.500H11L1 14M10 8L15 14L20 19M15 3L10 8M15 14L20 8M20 19L15 25" fill="none" stroke="#8a2f96" strokeWidth="1.200" />,
  <path d="M1 2.500H18L27 13L18 24H1L11 13ZM10 24L21 8M14 24L25 12" fill="none" stroke="#1c80dc" strokeWidth="1.200" />,
  <g fill="#f0f0f0"><circle cx="8" cy="12" r="1.700" /><circle cx="14" cy="12" r="1.700" /><circle cx="20" cy="12" r="1.700" /></g>,
];

/* ---------- data pane ---------- */
const SearchBox = styled.div`
  width: 258px; height: 35px; margin: 26px 0 0 6px; border: 1px solid #7c7c7c; border-radius: 5px; background: #202020; flex: none;
  display: flex; align-items: center; gap: 9px; padding-left: 18px; font-size: 18px; color: #9a9a9a;
`;
const FieldArea = styled.div`display: flex; flex: 1; margin-top: 12px; overflow: hidden;`;
const FieldList = styled.div`flex: 1; margin-top: -24px;`;
const DataRow = styled.div`display: flex; align-items: center; height: 36px; padding-left: 66px; font-size: 17px; white-space: nowrap;`;
const Check = styled.span`
  width: 18px; height: 18px; border: 1px solid #a8a8a8; border-radius: 3px; background: ${p => (p.$on ? '#2aaa92' : '#141414')};
  display: flex; align-items: center; justify-content: center;
`;
const Sigma = styled.span`width: 39px; padding-left: 12px; display: flex;`;
const DataName = styled.span`width: 119px; overflow: hidden; text-overflow: ellipsis;`;
const DataThumb = styled.div`width: 12px; margin: 153px 1px 0 0; background: #8a8886;`;
const fields = [
  ['Customer Name'], ['Discount', 1], ['Order Date'], ['Order ID'], ['Postal Code', 1], ['Product ID'], ['Product Name'],
  ['Profit', 1, 1], ['Quantity', 1], ['Region', 0, 1], ['Row ID', 1], ['Sales', 1], ['Segment'], ['Ship Date'], ['Ship Mode'], ['State'], ['Sub-Category'],
];

export default function App() {
  return (
    <App_>
      <Global />
      <Ribbon>
        <Group $w={235}>
          <Tools>
            <ToolBox $w={73} $dim><PasteIcon /><ToolLine>Paste</ToolLine></ToolBox>
            <ClipList>
              <ClipRow><CutIcon />Cut</ClipRow>
              <ClipRow><CopyIcon />Copy</ClipRow>
              <ClipRow><PainterIcon />Format painter</ClipRow>
            </ClipList>
          </Tools>
          <GroupName $pad={5}>Clipboard</GroupName>
        </Group>
        <Group $w={537} $pad={12}>
          <Tools>
            <Tool w={61} icon={icons.getData} lines={['Get', 'data']} arrow />
            <Tool w={83} icon={icons.excel} lines={['Excel', 'workbook']} ls={[0, 0.45]} />
            <Tool w={82} icon={icons.oneLake} lines={['OneLake', 'catalog']} arrow ls={[0.15, 0.3]} />
            <Tool w={60} icon={icons.sql} lines={['SQL', 'Server']} />
            <Tool w={60} icon={icons.enter} lines={['Enter', 'data']} />
            <Tool w={84} icon={icons.dataverse} lines={['Dataverse']} ls={[0.15]} />
            <Tool w={83} icon={icons.recent} lines={['Recent', 'sources']} arrow ls={[0, 0.2]} />
          </Tools>
          <GroupName $pad={12}>Data</GroupName>
        </Group>
        <Group $w={173} $pad={14}>
          <Tools>
            <Tool w={80} icon={icons.transform} lines={['Transform', 'data']} arrow />
            <Tool w={69} icon={icons.refresh} lines={['Refresh']} />
          </Tools>
          <GroupName $pad={14}>Queries</GroupName>
        </Group>
        <Group $w={220} $pad={12}>
          <Tools>
            <Tool w={60} icon={icons.newVisual} lines={['New', 'visual']} />
            <Tool w={60} icon={icons.textBox} lines={['Text', 'box']} />
            <Tool w={71} icon={icons.more} lines={['More', 'visuals']} arrow />
          </Tools>
          <GroupName $pad={12}>Insert</GroupName>
        </Group>
        <Group $w={278} $pad={11}>
          <Tools>
            <Tool w={108} icon={icons.calc} lines={['New visual', 'calculation']} arrow ls={[0.25, 0.15]} />
            <Tool w={76} icon={icons.measure} lines={['New', 'measure']} />
            <Tool w={68} icon={icons.quick} lines={['Quick', 'measure']} />
          </Tools>
          <GroupName $pad={11}>Calculations</GroupName>
        </Group>
        <Group $w={110}>
          <Tools><Tool w={109} icon={icons.sensitivity} lines={['Sensitivity', '']} arrow dim ls={[0.2]} /></Tools>
          <GroupName>Sensitivity</GroupName>
        </Group>
        <Group $w={87}>
          <Tools><Tool w={86} icon={icons.publish} lines={['Publish']} /></Tools>
          <GroupName>Share</GroupName>
        </Group>
        <Group $w={197} $pad={13}>
          <Tools>
            <Tool w={107} icon={icons.prep} lines={['Prep data for', 'AI']} ls={[0.4]} />
            <Tool w={65} icon={icons.copilot} lines={['Copilot']} ls={[0.4]} />
          </Tools>
          <GroupName $pad={13}>Copilot</GroupName>
        </Group>
        <Collapse><Chevron s={14} up w={1.8} /></Collapse>
      </Ribbon>
      <Body>
        <Rail>
          <RailItem>
            <svg width="28" height="24" viewBox="0 0 28 24" fill="none" stroke="#e0e0e0" strokeWidth="1.300"><path d="M4 1V22.500H24M7 5H11V20H7ZM13 9H17V20H13ZM19 2H23V20H19Z" /></svg>
          </RailItem>
          <RailItem>
            <svg width="28" height="24" viewBox="0 0 28 24" fill="none" stroke="#c8c8c8" strokeWidth="1.400"><path d="M2.500 0.700H25.500V23H2.500ZM2.500 3H25.500M2.500 6.500H25.500M2.500 12H25.500M2.500 17.500H25.500M10 3V23M18 3V23" /></svg>
          </RailItem>
          <RailItem>
            <svg width="28" height="30" viewBox="0 0 28 30" fill="none" stroke="#d0d0d0" strokeWidth="1.500"><path d="M0 9.500H12V19.500H0ZM0 12.500H12M16 2H27.500V13H16ZM16 5H27.500M16 17.500H27.500V28.500H16ZM16 20.500H27.500M7 9V5H16M7 20V24.500H16" /></svg>
          </RailItem>
          <RailItem>
            <svg width="28" height="28" viewBox="0 0 28 28" fill="none" stroke="#d0d0d0" strokeWidth="1.400"><path d="M6 15V6Q6 3 9 3H15L21 10V20Q21 23 20 24M14 3.500V10H21M24 12V20Q24 24 20.500 25" /><text x="0" y="25.500" fontSize="9" fontWeight="700" fill="#e0e0e0" stroke="none" textLength="18" lengthAdjust="spacingAndGlyphs">DAX</text></svg>
          </RailItem>
        </Rail>
        <Center>
          <Stage>
            <CanvasArea>
              <ReportPage>
                <Visual $w={562}>
                  <VisualHeader>
                    <svg width="18" height="14" viewBox="0 0 18 14" stroke="#777" strokeWidth="1.500"><path d="M0 1.500H18M3 7H15M6 12.500H12" /></svg>
                    <svg width="19" height="20" viewBox="0 0 19 20" fill="none" stroke="#777" strokeWidth="1.500"><path d="M8 1.500H4Q1 1.500 1 4.500V15.500Q1 18.500 4 18.500H14Q18 18.500 18 15.500V11M11 1.500H18V8M18 1.500L11 8M1 10.500H6.500Q9 10.500 9 13V18" /></svg>
                    <svg width="18" height="6" viewBox="0 0 18 6" fill="#777"><circle cx="3" cy="3" r="1.900" /><circle cx="9" cy="3" r="1.900" /><circle cx="15" cy="3" r="1.900" /></svg>
                  </VisualHeader>
                  <BarChart />
                </Visual>
                <Visual $w={570}>
                  <VisualHeader />
                  <Treemap />
                </Visual>
              </ReportPage>
            </CanvasArea>
            <FiltersPane>
              <Double left c="#252423" />
              <FilterGlyph width="12" height="14" viewBox="0 0 12 14" stroke="#252423" strokeWidth="1.500"><path d="M1.500 5.500V8.500M6 3V11M10.800 0V14" /></FilterGlyph>
              <FiltersLabel>Filters</FiltersLabel>
            </FiltersPane>
          </Stage>
          <Footer>
            <FootIcons>
              <svg width="190" height="35" viewBox="45 803 190 35" fill="none" stroke="#f0f0f0" strokeWidth="2">
                <rect x="66" y="814" width="22" height="16.500" rx="2.500" /><path d="M73 831V835M81 831V835M69 836.500H86" />
                <rect x="136" y="812" width="14.500" height="24" rx="2" /><path d="M140 833H146" />
                <path d="M192 823.500V833.500L185.500 828.500ZM217.500 823.500V833.500L224 828.500Z" strokeWidth="1.200" stroke="#d0c8d0" />
              </svg>
            </FootIcons>
            <PageTab>Page 1</PageTab>
            <AddTab><svg width="17" height="17" viewBox="0 0 17 17" stroke="#1c1c1c" strokeWidth="3.600"><path d="M8.500 0V17M0 8.500H17" /></svg></AddTab>
          </Footer>
        </Center>
        <Pane $w={271} $line>
          <PaneHead $r={16}>Visualizations<Double /></PaneHead>
          <SubHead>Build visual</SubHead>
          <ModeTabs>
            <ModeTab $on>
              <svg width="36" height="36" viewBox="0 0 36 36" fill="#2aaa92" stroke="#c8c8c8"><path d="M0 1H29" strokeWidth="1.600" /><rect x="1" y="8" width="34" height="11" strokeWidth="1.600" strokeDasharray="3 2" /><rect x="1" y="24.500" width="34" height="11" strokeWidth="1.600" strokeDasharray="3 2" /></svg>
            </ModeTab>
            <ModeTab>
              <svg width="34" height="36" viewBox="0 0 34 36" fill="none" stroke="#a8a8a8" strokeWidth="1.500"><path d="M1.500 29V14H10V1.500H19V20M19 9H28M10 14V27" /><path d="M33 12Q31 12 14 27Q17 28 18 31L33 14ZM14 27Q9 28 9 33L5 34.500Q16 37 18 31" /></svg>
            </ModeTab>
            <ModeTab>
              <svg width="36" height="36" viewBox="0 0 36 36" fill="none" stroke="#a8a8a8" strokeWidth="1.600"><circle cx="15.500" cy="15.500" r="14.500" /><path d="M2 17L8 13L13 17L26 8M8 19V27M13 20V30M18.500 17V30M24 14V26" /><path d="M26 26L35 35" strokeWidth="3.500" /></svg>
            </ModeTab>
          </ModeTabs>
          <Notch width="270" height="14" viewBox="0 0 270 14" fill="none" stroke="#7c7c7c"><path d="M0 13H24L36 1.500L48 13H270" /></Notch>
          <IconGrid>
            {viz.map((v, i) => (
              <IconCell key={i} $on={i === 0}><svg width="28" height="28" viewBox="0 0 28 28" overflow="visible" fontFamily={UI}>{v}</svg></IconCell>
            ))}
          </IconGrid>
          <Wells>
            <WellList>
              {[['Y-axis', 'Region'], ['X-axis', 'Sum of Profit']].map(([n, f]) => (
                <Well key={n}>
                  <WellName>{n}</WellName>
                  <Drop><Field><FieldName>{f}</FieldName><Chevron s={12} w={1.4} /><svg width="10" height="10" viewBox="0 0 11 11" stroke="#e8e8e8" strokeWidth="1.400"><path d="M1 1L10 10M10 1L1 10" /></svg></Field></Drop>
                </Well>
              ))}
            </WellList>
            <Thumb />
          </Wells>
        </Pane>
        <Pane $w={265}>
          <PaneHead $r={10}>Data<Double /></PaneHead>
          <SearchBox>
            <svg width="23" height="22" viewBox="0 0 23 22" fill="none" stroke="#b0b0b0" strokeWidth="1.400"><ellipse cx="9.500" cy="9.500" rx="8.500" ry="8" /><path d="M15.500 15L22 21" /></svg>
            Search
          </SearchBox>
          <FieldArea>
            <FieldList>
              {fields.map(([n, s, on]) => (
                <DataRow key={n}>
                  <Check $on={on}>{on ? <svg width="12" height="9" viewBox="0 0 12 9" fill="none" stroke="#15594c" strokeWidth="1.200"><path d="M0.500 4.500L4 8L11.500 1" /></svg> : null}</Check>
                  <Sigma>{s ? <svg width="17" height="18" viewBox="0 0 17 18" fill="none" stroke="#f0f0f0" strokeWidth="1.500"><path d="M16 1H1.500L9 9L1.500 17H16" /></svg> : null}</Sigma>
                  <DataName>{n}</DataName>
                </DataRow>
              ))}
            </FieldList>
            <DataThumb />
          </FieldArea>
        </Pane>
      </Body>
    </App_>
  );
}
